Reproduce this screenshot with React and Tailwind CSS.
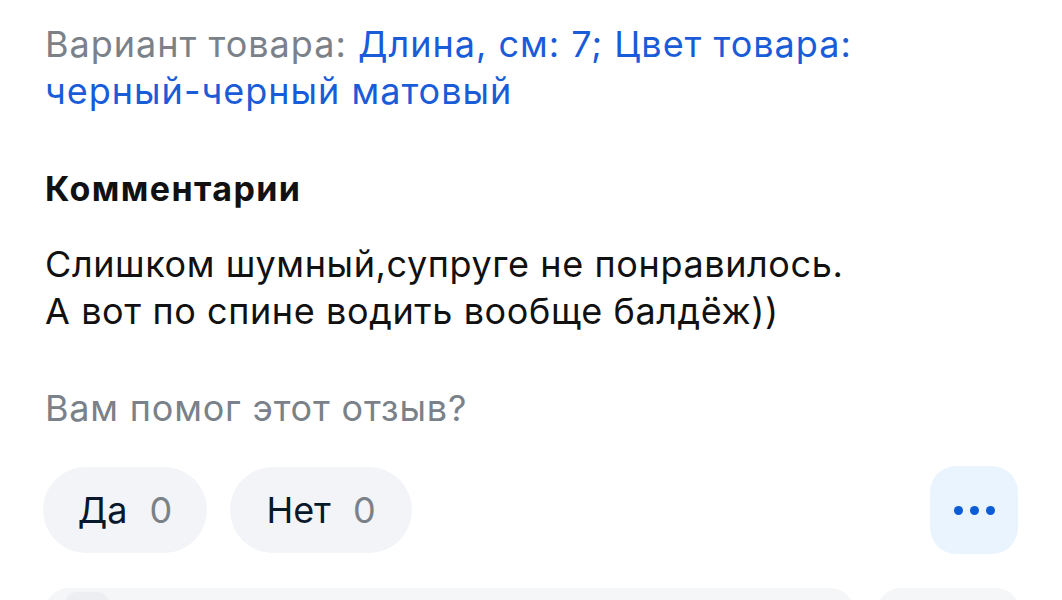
export default function App() {
  const font = { fontFamily: "Inter, 'Noto Sans', Roboto, sans-serif" };
  return (
    <div className="w-[1062px] h-[600px] bg-white overflow-hidden" style={font}>
      <div className="pl-[45px] pr-[42px] pt-[21px]">
        <p className="text-[36px] leading-[47px] text-[#7a8189] tracking-[1px]">
          Вариант товара:{" "}
          <span className="text-[#1a5cd8]">
            Длина, см: 7; Цвет товара: <span className="whitespace-nowrap">черный-черный</span> матовый
          </span>
        </p>
        <h2 className="mt-[54px] text-[34px] leading-[40px] font-bold text-[#111] tracking-[1.4px]">Комментарии</h2>
        <p className="mt-[32px] text-[36px] leading-[47px] text-[#111] tracking-[0.6px]">
          Слишком шумный,супруге не понравилось.
          <br />
          А вот по спине водить вообще балдёж))
        </p>
        <p className="mt-[53px] text-[36px] leading-[40px] text-[#7a8189] tracking-[0.8px]">Вам помог этот отзыв?</p>
        <div className="mt-[38px] flex items-center">
          <div className="flex gap-[23px] -ml-[2px]">
            <button className="h-[86px] w-[164px] justify-center rounded-full bg-[#f2f4f7] flex items-center gap-[22px] text-[36px]">
              <span className="text-[#07182b]">Да</span>
              <span className="text-[#7a8189]">0</span>
            </button>
            <button className="h-[86px] w-[182px] justify-center rounded-full bg-[#f2f4f7] flex items-center gap-[22px] text-[36px]">
              <span className="text-[#07182b]">Нет</span>
              <span className="text-[#7a8189]">0</span>
            </button>
          </div>
          <button className="ml-auto mr-[2px] w-[88px] h-[88px] rounded-[26px] bg-[#eaf4fe] flex items-center justify-center gap-[7px]">
            <span className="w-[9px] h-[9px] rounded-full bg-[#0b5cd6]" />
            <span className="w-[9px] h-[9px] rounded-full bg-[#0b5cd6]" />
            <span className="w-[9px] h-[9px] rounded-full bg-[#0b5cd6]" />
          </button>
        </div>
        <div className="mt-[34px] flex gap-[23px]">
          <div className="w-[809px] h-[60px] rounded-[24px] bg-[#f5f6f8] pl-[20px] pt-[4px]">
            <div className="w-[44px] h-[44px] rounded-[12px] bg-[#eceef2]" />
          </div>
          <div className="w-[143px] h-[60px] rounded-[24px] bg-[#f5f6f8]" />
        </div>
      </div>
    </div>
  );
}
